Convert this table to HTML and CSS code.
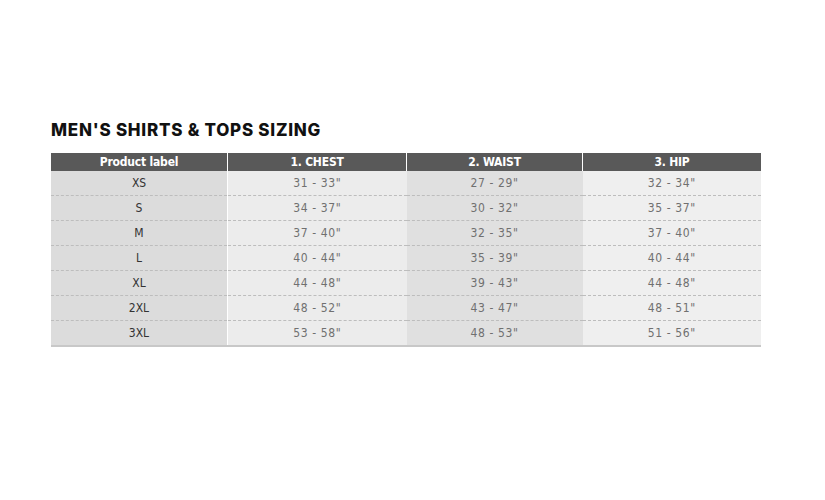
FILE: index.html
```html
<!DOCTYPE html>
<html>
<head>
<meta charset="utf-8">
<link rel="stylesheet" href="styles.css">
</head>
<body>
<div class="page">
  <h2 class="title">MEN'S SHIRTS &amp; TOPS SIZING</h2>
  <table class="sizes">
    <thead>
      <tr>
        <th class="c-label">Product label</th>
        <th class="c-chest">1. CHEST</th>
        <th class="c-waist">2. WAIST</th>
        <th class="c-hip">3. HIP</th>
      </tr>
    </thead>
    <tbody>
      <tr><td class="c-label">XS</td><td class="c-chest">31 - 33"</td><td class="c-waist">27 - 29"</td><td class="c-hip">32 - 34"</td></tr>
      <tr><td class="c-label">S</td><td class="c-chest">34 - 37"</td><td class="c-waist">30 - 32"</td><td class="c-hip">35 - 37"</td></tr>
      <tr><td class="c-label">M</td><td class="c-chest">37 - 40"</td><td class="c-waist">32 - 35"</td><td class="c-hip">37 - 40"</td></tr>
      <tr><td class="c-label">L</td><td class="c-chest">40 - 44"</td><td class="c-waist">35 - 39"</td><td class="c-hip">40 - 44"</td></tr>
      <tr><td class="c-label">XL</td><td class="c-chest">44 - 48"</td><td class="c-waist">39 - 43"</td><td class="c-hip">44 - 48"</td></tr>
      <tr><td class="c-label">2XL</td><td class="c-chest">48 - 52"</td><td class="c-waist">43 - 47"</td><td class="c-hip">48 - 51"</td></tr>
      <tr><td class="c-label">3XL</td><td class="c-chest">53 - 58"</td><td class="c-waist">48 - 53"</td><td class="c-hip">51 - 56"</td></tr>
    </tbody>
  </table>
</div>
</body>
</html>
```

FILE: styles.css
```css
html, body {
  margin: 0;
  padding: 0;
  background: #ffffff;
}

.page {
  padding: 120px 64px 0 51px;
}

.title {
  margin: 0 0 13px 0;
  font-family: "Inter", "Lato", sans-serif;
  font-weight: 800;
  font-size: 17px;
  line-height: 20px;
  letter-spacing: 0.75px;
  color: #111111;
}

.sizes {
  width: 707px;
  border-collapse: collapse;
  table-layout: fixed;
  font-family: "DejaVu Sans Condensed", "DejaVu Sans", sans-serif;
  border-bottom: 2px solid #c8c8c8;
}

.sizes th {
  height: 17px;
  padding: 0;
  background: #595959;
  color: #ffffff;
  font-size: 12px;
  font-weight: bold;
  text-align: center;
  border-left: 1px solid #ffffff;
  letter-spacing: -0.2px;
}

.sizes th:first-child {
  border-left: none;
}

.sizes td {
  height: 24px;
  padding: 0;
  text-align: center;
  font-size: 12px;
  color: #707070;
  letter-spacing: 0.6px;
  border-top: 1px dashed #bdbdbd;
}

.sizes tbody tr:first-child td {
  border-top: 1px solid transparent;
}

.c-label { width: 176px; }
.c-chest { width: 178px; }
.c-waist { width: 175px; }
.c-hip { width: 178px; }

.sizes td.c-label {
  background: #dcdcdc;
  color: #333333;
  letter-spacing: 0;
  border-right: 1px solid #ffffff;
}

.sizes td.c-chest { background: #ececec; }
.sizes td.c-waist { background: #e0e0e0; }
.sizes td.c-hip { background: #efefef; }
```
